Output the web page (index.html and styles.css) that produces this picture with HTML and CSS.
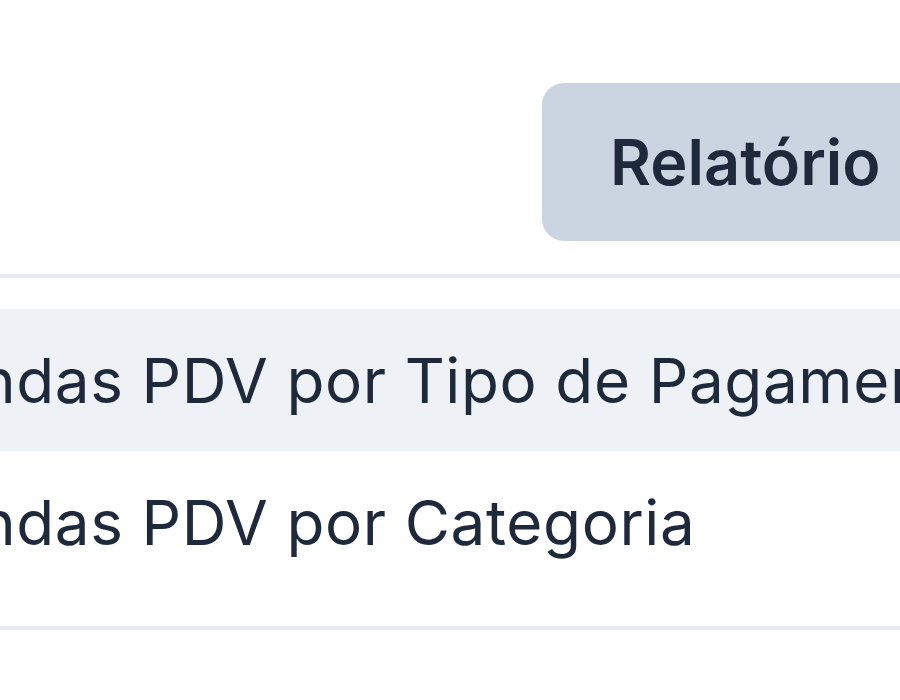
FILE: index.html
```html
<!DOCTYPE html>
<html lang="pt-BR">
<head>
    <meta charset="UTF-8">
    <meta name="viewport" content="width=device-width, initial-scale=1.0">
    <title>Relatórios</title>
    <link rel="stylesheet" href="styles.css">
</head>
<body>
    <div class="page">
        <!-- barra com o botão de relatório -->
        <div class="toolbar">
            <button class="report-btn">Relatório</button>
        </div>

        <!-- lista de relatórios -->
        <div class="report-list">
            <div class="report-item active">Vendas PDV por Tipo de Pagamento</div>
            <div class="report-item">Vendas PDV por Categoria</div>
        </div>
    </div>
</body>
</html>
```

FILE: styles.css
```css
html, body {
    margin: 0;
    height: 100%;
    overflow: hidden;
    background-color: #ffffff;
}
body {
    font-family: 'Inter', 'Noto Sans', sans-serif;
    color: #1e293b;
}
.page {
    width: 1100px;
    margin-left: -130px;
}

.toolbar {
    display: flex;
    justify-content: flex-start;
    padding: 83px 0 33px 672px;
}
.report-btn {
    height: 158px;
    padding: 0 68px;
    background-color: #cbd5e1;
    color: #1e293b;
    border: none;
    border-radius: 22px;
    font-family: inherit;
    font-size: 63px;
    font-weight: 600;
    cursor: pointer;
}

.report-list {
    border-top: 4px solid #e5eaf1;
    border-bottom: 4px solid #e5eaf1;
    padding: 31px 0 33px;
}
.report-item {
    height: 142px;
    display: flex;
    align-items: center;
    padding-left: 32px;
    font-size: 62px;
    letter-spacing: 0.6px;
    white-space: nowrap;
    cursor: pointer;
}
.report-item.active {
    background-color: #eef2f6;
}
```
